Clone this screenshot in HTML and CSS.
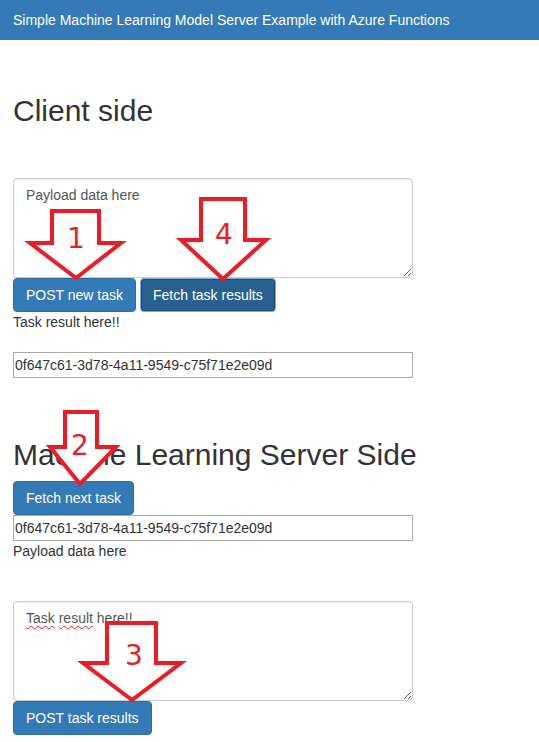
FILE: index.html
```html
<!DOCTYPE html>
<html lang="en">
<head>
<meta charset="utf-8">
<title>Simple Machine Learning Model Server Example with Azure Functions</title>
<link rel="stylesheet" href="styles.css">
</head>
<body>
<header class="navbar">Simple Machine Learning Model Server Example with Azure Functions</header>
<main class="container">
  <section class="client">
    <h2 class="section-title client-title">Client side</h2>
    <textarea class="textbox">Payload data here</textarea>
    <div class="btn-row">
      <button class="btn">POST new task</button>
      <button class="btn btn-active">Fetch task results</button>
    </div>
    <div class="line">Task result here!!</div>
    <input class="plain-input client-input" type="text" value="0f647c61-3d78-4a11-9549-c75f71e2e09d">
  </section>
  <section class="server">
    <h2 class="section-title server-title">Machine Learning Server Side</h2>
    <div class="btn-row"><button class="btn">Fetch next task</button></div>
    <input class="plain-input" type="text" value="0f647c61-3d78-4a11-9549-c75f71e2e09d">
    <div class="line">Payload data here</div>
    <div class="textbox textbox-div server-box"><span class="misspelled">Task</span> <span class="misspelled">result</span> here!!</div>
    <div class="btn-row"><button class="btn">POST task results</button></div>
  </section>
</main>
<svg class="annotations" width="539" height="742" viewBox="0 0 539 742" aria-hidden="true">
  <g class="arrow">
    <polygon points="52,211 99,211 99,243 121,243 76,278 30,243 52,243"/>
    <text x="76" y="248">1</text>
  </g>
  <g class="arrow">
    <polygon points="201,199 245,199 245,240 266,240 223,279 181,240 201,240"/>
    <text x="224" y="244">4</text>
  </g>
  <g class="arrow">
    <polygon points="65,412 97,412 97,447 116,447 80,484 50,447 65,447"/>
    <text x="80" y="455">2</text>
  </g>
  <g class="arrow">
    <polygon points="107,623 156,623 156,663 181,663 132,700 83,663 107,663"/>
    <text x="134" y="665">3</text>
  </g>
</svg>
</body>
</html>
```
FILE: styles.css
```css
* { box-sizing: border-box; }

body {
  margin: 0;
  position: relative;
  font-family: "Liberation Sans", Arial, sans-serif;
  font-size: 14px;
  line-height: 20px;
  color: #333;
  background: #fff;
}

.navbar {
  height: 40px;
  padding: 10px 13px;
  background: #337ab7;
  color: #fff;
  font-size: 14px;
  line-height: 20px;
}

.container {
  padding: 0 13px;
  display: flex;
  flex-direction: column;
}

.client, .server {
  display: flex;
  flex-direction: column;
  align-items: flex-start;
}

.section-title {
  font-size: 30px;
  line-height: 33px;
  font-weight: 500;
  margin: 0;
  color: #333;
  white-space: nowrap;
}

.client-title { margin: 54px 0 51px; }
.server-title { margin: 60px 0 10px; }

.textbox {
  display: block;
  width: 400px;
  height: 100px;
  margin: 0;
  padding: 6px 12px;
  border: 1px solid #ccc;
  border-radius: 4px;
  font-family: inherit;
  font-size: 14px;
  line-height: 20px;
  color: #555;
  background: #fff;
  box-shadow: inset 0 1px 1px rgba(0,0,0,.075);
  resize: both;
}

.textbox-div {
  overflow: auto;
}

.server-box { margin-top: 40px; }

.misspelled {
  text-decoration: underline wavy #e0201a;
  text-decoration-thickness: 1px;
  text-underline-offset: 2px;
}

.btn-row {
  display: flex;
  gap: 4px;
}

.btn {
  display: inline-block;
  margin: 0;
  padding: 6px 12px;
  height: 34px;
  font-family: inherit;
  font-size: 14px;
  line-height: 20px;
  color: #fff;
  background: #337ab7;
  border: 1px solid #2e6da4;
  border-radius: 4px;
  white-space: nowrap;
  cursor: pointer;
}

.btn-active {
  background: #286090;
  border-color: #7ea9dc;
  box-shadow: inset 0 0 0 1px #204d74;
}

.line {
  line-height: 20px;
  color: #333;
}

.plain-input {
  display: block;
  width: 400px;
  height: 26px;
  margin: 0;
  padding: 2px 1px;
  border: 1px solid #a9a9a9;
  border-radius: 0;
  font-family: inherit;
  font-size: 14px;
  line-height: 20px;
  color: #333;
  background: #fff;
}

.client-input { margin-top: 20px; }

.annotations {
  position: absolute;
  top: 0;
  left: 0;
  pointer-events: none;
}

.arrow polygon {
  fill: #fff;
  stroke: #ed1c24;
  stroke-width: 4;
  stroke-linejoin: miter;
  stroke-miterlimit: 10;
}

.arrow text {
  fill: #ed1c24;
  font-family: "DejaVu Sans", sans-serif;
  font-size: 28px;
  text-anchor: middle;
}
```
